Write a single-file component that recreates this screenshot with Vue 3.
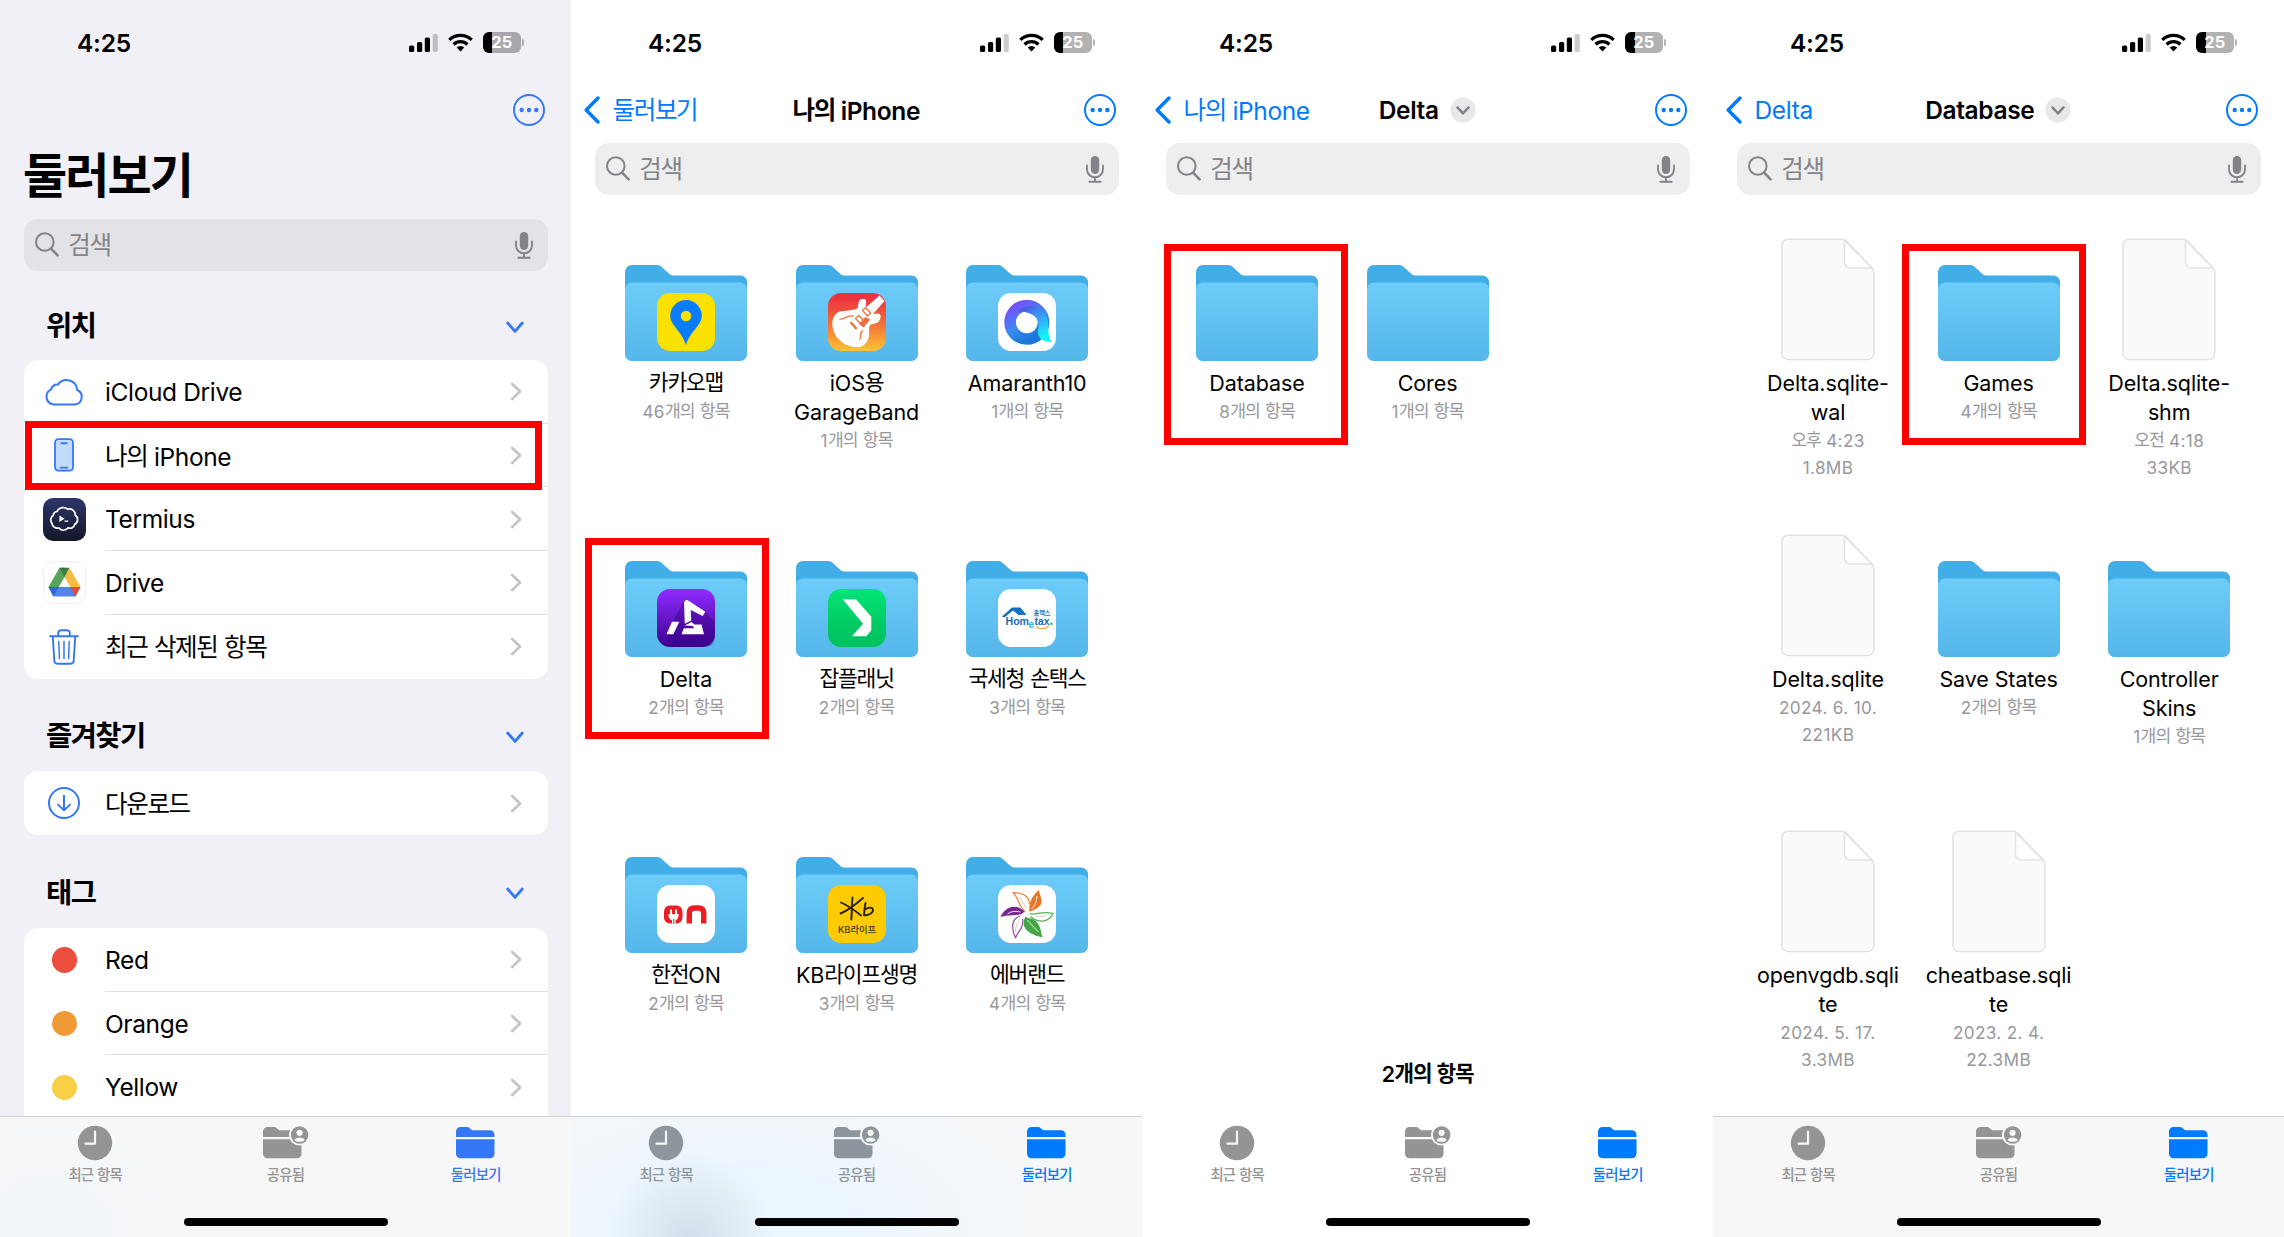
<script setup>
import { h } from 'vue'

// Splits a label into Hangul and Latin runs so each script gets its own tracking.
const Txt = (props) =>
  h(
    'span',
    { class: 'txt' },
    (props.t.match(/[가-힣]+|[^가-힣]+/g) || []).map((r) =>
      h('span', { class: /[가-힣]/.test(r) ? 'ko' : 'la' }, r)
    )
  )
Txt.props = ['t']

const sections = [
  {
    title: '위치',
    rows: [
      { icon: 'cloud', label: 'iCloud Drive' },
      { icon: 'phone', label: '나의 iPhone' },
      { icon: 'termius', label: 'Termius' },
      { icon: 'gdrive', label: 'Drive' },
      { icon: 'trash', label: '최근 삭제된 항목' },
    ],
  },
  { title: '즐겨찾기', rows: [{ icon: 'download', label: '다운로드' }] },
  {
    title: '태그',
    open: true,
    rows: [
      { icon: 'dot', color: '#eb4e3d', label: 'Red' },
      { icon: 'dot', color: '#f09a37', label: 'Orange' },
      { icon: 'dot', color: '#f8cf47', label: 'Yellow' },
    ],
  },
]

const folder = (name, sub, app) => ({ kind: 'folder', name: [].concat(name), sub: [].concat(sub), app })
const file = (name, sub) => ({ kind: 'file', name: [].concat(name), sub })

const panels = [
  { id: 'browse', root: true, mark: 'm1' },
  {
    id: 'phone',
    back: '둘러보기',
    title: '나의 iPhone',
    mark: 'm2',
    items: [
      folder('카카오맵', '46개의 항목', 'kakao'),
      folder(['iOS용', 'GarageBand'], '1개의 항목', 'garage'),
      folder('Amaranth10', '1개의 항목', 'amaranth'),
      folder('Delta', '2개의 항목', 'delta'),
      folder('잡플래닛', '2개의 항목', 'job'),
      folder('국세청 손택스', '3개의 항목', 'tax'),
      folder('한전ON', '2개의 항목', 'on'),
      folder('KB라이프생명', '3개의 항목', 'kb'),
      folder('에버랜드', '4개의 항목', 'ever'),
    ],
  },
  {
    id: 'delta',
    back: '나의 iPhone',
    title: 'Delta',
    menu: true,
    mark: 'm3',
    footer: '2개의 항목',
    items: [folder('Database', '8개의 항목'), folder('Cores', '1개의 항목')],
  },
  {
    id: 'database',
    back: 'Delta',
    title: 'Database',
    menu: true,
    mark: 'm4',
    items: [
      file(['Delta.sqlite-', 'wal'], ['오후 4:23', '1.8MB']),
      folder('Games', '4개의 항목'),
      file(['Delta.sqlite-', 'shm'], ['오전 4:18', '33KB']),
      file('Delta.sqlite', ['2024. 6. 10.', '221KB']),
      folder('Save States', '2개의 항목'),
      folder(['Controller', 'Skins'], '1개의 항목'),
      file(['openvgdb.sqli', 'te'], ['2024. 5. 17.', '3.3MB']),
      file(['cheatbase.sqli', 'te'], ['2023. 2. 4.', '22.3MB']),
    ],
  },
]
</script>

<template>
  <div class="board">
    <svg class="defs" width="0" height="0">
      <defs>
        <linearGradient id="gFront" x1="0" y1="0" x2="0" y2="1"><stop offset="0" stop-color="#6dccf8" /><stop offset="1" stop-color="#55b6ea" /></linearGradient>
        <linearGradient id="gTerm" x1="0" y1="0" x2="0" y2="1"><stop offset="0" stop-color="#2d3669" /><stop offset="1" stop-color="#141728" /></linearGradient>
        <linearGradient id="gGarage" x1="0" y1="0" x2="0" y2="1"><stop offset="0.1" stop-color="#ee3340" /><stop offset="0.55" stop-color="#f4733a" /><stop offset="1" stop-color="#fcc52f" /></linearGradient>
        <linearGradient id="gAma" x1="0" y1="0" x2="0.6" y2="1"><stop offset="0" stop-color="#7a4cff" /><stop offset="0.6" stop-color="#3a8cf0" /><stop offset="1" stop-color="#1a76d8" /></linearGradient>
        <linearGradient id="gAma2" x1="0" y1="0" x2="0.5" y2="1"><stop offset="0" stop-color="#4a4bd0" /><stop offset="0.4" stop-color="#3f8df5" /><stop offset="1" stop-color="#12f4f6" /></linearGradient>
        <linearGradient id="gDelta" x1="0" y1="0" x2="0" y2="1"><stop offset="0" stop-color="#8f2bff" /><stop offset="1" stop-color="#3d0190" /></linearGradient>
        <linearGradient id="gJob" x1="0" y1="0" x2="0" y2="1"><stop offset="0" stop-color="#03e577" /><stop offset="0.6" stop-color="#00cb63" /><stop offset="1" stop-color="#00c25f" /></linearGradient>
      </defs>
    </svg>

    <section v-for="p in panels" :key="p.id" class="panel" :class="['p-' + p.id, { root: p.root }]">
      <header class="status">
        <span class="time">4:25</span>
        <svg class="signal" width="29" height="20" viewBox="0 0 29 20">
          <rect x="0" y="12.5" width="5.2" height="6.5" rx="1.6" />
          <rect x="8" y="9" width="5.2" height="10" rx="1.6" />
          <rect x="15.8" y="4.5" width="5.2" height="14.5" rx="1.6" />
          <rect x="23.6" y="1" width="5.2" height="18" rx="1.6" opacity="0.2" />
        </svg>
        <svg class="wifi" width="25" height="19" viewBox="0 0 25 19">
          <g fill="none" stroke="#000" stroke-width="3.2">
            <path d="M1.3 6.9a16 16 0 0 1 22.4 0" />
            <path d="M5.6 11.5a9.8 9.8 0 0 1 13.8 0" />
          </g>
          <path d="M12.5 18.6l-3.8-4.1a5.5 5.5 0 0 1 7.6 0z" />
        </svg>
        <span class="battery"><i></i><b>25</b></span>
      </header>

      <nav class="nav">
        <div class="back">
          <template v-if="p.back">
            <svg width="16" height="28" viewBox="0 0 16 28"><path d="M14 2L2.2 14 14 26" fill="none" stroke="currentColor" stroke-width="3.4" stroke-linecap="round" stroke-linejoin="round" /></svg>
            <Txt :t="p.back" />
          </template>
        </div>
        <div v-if="p.title" class="heading">
          <Txt :t="p.title" />
          <svg v-if="p.menu" width="26" height="26" viewBox="0 0 26 26"><circle cx="13" cy="13" r="12.6" fill="#e8e8e9" /><path d="M7.4 10.4l5.6 6 5.6-6" fill="none" stroke="#808085" stroke-width="2.4" stroke-linecap="round" stroke-linejoin="round" /></svg>
        </div>
        <div class="more">
          <svg width="34" height="34" viewBox="0 0 34 34"><circle cx="17" cy="17" r="15" fill="none" stroke="currentColor" stroke-width="2" /><g fill="currentColor"><circle cx="9.7" cy="17" r="2.2" /><circle cx="17" cy="17" r="2.2" /><circle cx="24.3" cy="17" r="2.2" /></g></svg>
        </div>
      </nav>

      <h1 v-if="p.root" class="big"><Txt t="둘러보기" /></h1>

      <div class="search">
        <svg width="24" height="25" viewBox="0 0 24 25"><circle cx="9.8" cy="10" r="8.8" fill="none" stroke="#838388" stroke-width="2" /><path d="M16.3 16.8l6.3 6.6" stroke="#838388" stroke-width="2.5" stroke-linecap="round" /></svg>
        <Txt t="검색" />
        <svg class="mic" width="18" height="28" viewBox="0 0 18 28"><rect x="4.8" y="1" width="8.4" height="18" rx="4.2" fill="#838388" /><path d="M1 10.5v3.8a8 8 0 0 0 16 0v-3.8M9 22.4v4.2M3.4 26.8h11.2" fill="none" stroke="#838388" stroke-width="1.9" stroke-linecap="round" /></svg>
      </div>

      <main v-if="p.root" class="lists">
        <template v-for="s in sections" :key="s.title">
          <div class="sec">
            <Txt :t="s.title" />
            <svg width="18" height="13" viewBox="0 0 18 13"><path d="M1.7 2l7.3 8.4L16.3 2" fill="none" stroke="#3478f6" stroke-width="2.8" stroke-linecap="round" stroke-linejoin="round" /></svg>
          </div>
          <div class="card" :class="{ open: s.open }">
            <div v-for="r in s.rows" :key="r.label" class="row">
              <span class="ico">
                <svg v-if="r.icon === 'cloud'" width="40" height="30" viewBox="0 0 40 30"><path d="M9.5 27.5A8 8 0 0 1 7.2 12.3 6 6 0 0 1 14 7.6 10.6 10.6 0 0 1 33.2 13 7.6 7.6 0 0 1 31 27.5z" fill="none" stroke="#3478f6" stroke-width="2" stroke-linejoin="round" /></svg>
                <svg v-else-if="r.icon === 'phone'" width="20" height="34" viewBox="0 0 20 34"><rect x="1" y="1.2" width="18" height="31.4" rx="3.4" fill="#c2dafb" stroke="#3478f6" stroke-width="1.8" /><path d="M7.4 5.2h5.2" stroke="#3478f6" stroke-width="2" stroke-linecap="round" /><path d="M6.4 29.6h7.2" stroke="#3478f6" stroke-width="1.6" stroke-linecap="round" /></svg>
                <svg v-else-if="r.icon === 'termius'" width="43" height="43" viewBox="0 0 43 43"><rect width="43" height="43" rx="10" fill="url(#gTerm)" /><path d="M14 13.5c2-4.5 8-5 10.5-2.3 4-1.2 8 1.8 7.7 5.8 3.4 2.5 3 7.5-.4 9.2-.6 3.3-4 4.8-6.6 3.6-2.4 3.2-7 3.2-9.2.2-3.6.7-6.6-1.2-7-4.4-2-2.6-1.6-6.4 1.2-8.1.2-1.8 1.6-3.8 3.8-4z" fill="none" stroke="#fff" stroke-width="1.7" /><path d="M17 18.6l3.4 2.1-3.4 2.1zM21.5 23.2h3.8" stroke="#fff" stroke-width="1.2" fill="#c9cde0" /></svg>
                <svg v-else-if="r.icon === 'gdrive'" width="43" height="43" viewBox="0 0 43 43"><rect x="0.5" y="0.5" width="42" height="42" rx="10" fill="#fff" stroke="#f0f0f1" /><path d="M16.4 6.7h5.1l3.2 6.1-8.6 17.6-5.4 5.1-5.2-9.500z" fill="#57a55c" /><path d="M16.4 6.7h10.2l-5.1 9.4z" fill="#3b7d3e" /><path d="M26.6 6.7L37.5 26h-10.3l-5.7-9.9z" fill="#f2bd42" /><path d="M5.5 26h32l-5 9.5h-22z" fill="#5383ec" /><path d="M5.5 26h10.3l-5.3 9.5z" fill="#3267d0" /><path d="M27.2 26h10.3l-5 9.5z" fill="#d9503f" /><path d="M21.5 16.1L27.2 26H15.8z" fill="#fff" /></svg>
                <svg v-else-if="r.icon === 'trash'" width="30" height="36" viewBox="0 0 30 36"><g fill="none" stroke="#3478f6" stroke-width="1.9" stroke-linecap="round" stroke-linejoin="round"><path d="M1.2 7.3h27.6" /><path d="M9.2 7V4a2.8 2.8 0 0 1 2.8-2.8h6A2.8 2.8 0 0 1 20.8 4v3" /><path d="M3.8 7.6l1.5 24.2a3 3 0 0 0 3 2.9h13.4a3 3 0 0 0 3-2.9l1.5-24.2" /><path d="M9.8 12.5l.6 17M15 12.5v17M20.2 12.5l-.6 17" stroke-width="1.5" /></g></svg>
                <svg v-else-if="r.icon === 'download'" width="34" height="34" viewBox="0 0 34 34"><g fill="none" stroke="#3478f6" stroke-width="2" stroke-linecap="round" stroke-linejoin="round"><circle cx="17" cy="17" r="15" /><path d="M17 9.8v14M11 18.6l6 5.8 6-5.8" /></g></svg>
                <i v-else class="dot" :style="{ background: r.color }"></i>
              </span>
              <div class="cell">
                <Txt :t="r.label" />
                <svg width="12" height="19" viewBox="0 0 12 19"><path d="M2 1.8l8 7.7-8 7.7" fill="none" stroke="#c4c4c7" stroke-width="2.6" stroke-linecap="round" stroke-linejoin="round" /></svg>
              </div>
            </div>
          </div>
        </template>
      </main>

      <main v-else class="grid">
        <div v-for="it in p.items" :key="it.name.join('')" class="item">
          <div class="thumb">
            <svg v-if="it.kind === 'folder'" width="122" height="96" viewBox="0 0 122 96">
              <path d="M0 28V7a7 7 0 0 1 7-7h25.5a6 6 0 0 1 4 1.7L44.5 9a5 5 0 0 0 3.5 1.5h67.5a6.5 6.5 0 0 1 6.5 6.5v14z" fill="#42aee8" />
              <path d="M0 24.5a7 7 0 0 1 7-7h108a7 7 0 0 1 7 7V89.5a6.5 6.5 0 0 1-6.5 6.5H6.5A6.5 6.5 0 0 1 0 89.5z" fill="url(#gFront)" />
            </svg>
            <svg v-else width="94" height="123" viewBox="0 0 94 123">
              <path d="M7 1.2h54.5c1.5 0 2.6.6 3.6 1.7l26.2 27.3c1 1 1.5 2 1.5 3.5V115.5a6 6 0 0 1-6 6H7a6 6 0 0 1-6-6v-108a6 6 0 0 1 6-6.3z" fill="#fafafa" stroke="#e3e3e4" stroke-width="1.6" />
              <path d="M63.5 2.2V24a6 6 0 0 0 6 6H91z" fill="#fff" stroke="#e3e3e4" stroke-width="1.6" stroke-linejoin="round" />
            </svg>

            <svg v-if="it.app" class="badge" width="58" height="58" viewBox="0 0 58 58">
              <template v-if="it.app === 'kakao'">
                <rect width="58" height="58" rx="13" fill="#fae100" />
                <path d="M29 7a15.8 15.8 0 0 1 15.8 15.8c0 9.5-10.8 14.5-15.8 29.2-5-14.7-15.8-19.7-15.8-29.2A15.8 15.8 0 0 1 29 7z" fill="#0a7cff" />
                <circle cx="29" cy="23" r="5.3" fill="#fae100" />
              </template>
              <template v-else-if="it.app === 'garage'">
                <rect width="58" height="58" rx="13" fill="url(#gGarage)" />
                <path d="M51.5 2.5l5 5.500L45 21c3-.8 6-1 7.2.7 1.200 1.700-.2 5.500-2.200 7.500-2.500 2-5.500.8-8 3-2 3 0 5.500-1 10.500-1 6-5 11.700-12.500 11.500C14 53.800 4.300 42 4.300 30.500c0-7 4.500-12.500 11-12.500 5 0 9-1 12.200-1.700 3.500-1 2-5.500 4-9 1.400-1.800 5.500-1.800 6.500 0 .8 2.500-1 4.500 0 7z" fill="#fff" />
                <g fill="none" stroke="#f4743a" stroke-width="1.3"><path d="M27.5 25.5l3.2-3 5 5-3.200 3zM34.5 17.5l3-3 5 5.500-3 3zM11.500 26c3 1.500 8-4.500 14-3M35 38c-4 1-1 6-3.500 8.500" /><path d="M22.500 29l6 7" stroke-width="2.4" /></g>
                <path d="M42 26.500l-6.500 8-4.500-3.500 6.500-7z" fill="#f26a3b" />
              </template>
              <template v-else-if="it.app === 'amaranth'">
                <rect width="58" height="58" rx="13" fill="#fff" />
                <circle cx="28.8" cy="29.3" r="16.7" fill="none" stroke="url(#gAma)" stroke-width="11.6" />
                <path d="M20 18c7-7 20-6 26 1 4.500 5.500 4.500 12 4.500 19 0 4 .7 6.500 3 10.500-4 .8-8.500-.5-11.500-3.500-2-3-2.300-5.500-2-8.500 2-8 0-16.500-20-18.500z" fill="url(#gAma2)" />
              </template>
              <template v-else-if="it.app === 'delta'">
                <rect width="58" height="58" rx="13" fill="url(#gDelta)" />
                <path d="M27 12L9.500 45.300 22 58h26c6 0 10-4 10-10V33L48 22.700z" fill="#35007f" opacity="0.35" />
                <g fill="#fff"><path d="M15 32.700h7.300l-6 12.600H9.500z" /><path d="M27 13.500c.5-2 2-2.800 3.500-2.500L48.300 22.700l-2.600 4.300-12-6 .6 10.500-6.500 3.200z" /><path d="M27.800 36.500l6.700-3.500 3 2.500h7l2.500 9.800H24.500l2.300-6h10.500l-1.500-2.300z" /></g>
              </template>
              <template v-else-if="it.app === 'job'">
                <rect width="58" height="58" rx="13" fill="url(#gJob)" />
                <path d="M14.7 10.300H28l15.300 17.400v13.600l-5 6H24l11-12.600z" fill="#fff" />
              </template>
              <template v-else-if="it.app === 'tax'">
                <rect width="58" height="58" rx="13" fill="#fff" />
                <path d="M4 27.500l10-9h8.500l6 7.500h-8l-5.500-4.500-8.500 7z" fill="#1272bd" />
                <text x="35.5" y="25.500" font-size="6.2" font-weight="700" fill="#1272bd" class="ktext" textLength="17">홈택스</text>
                <text x="7.5" y="35.5" font-size="11.5" font-weight="700" fill="#1a6db5" class="ltext" textLength="23.5" lengthAdjust="spacingAndGlyphs">Hom</text>
                <text x="30.5" y="38.5" font-size="10" font-weight="700" fill="#2ab4e0" class="ltext">e</text>
                <text x="36.5" y="35.5" font-size="11.5" font-weight="700" fill="#1a6db5" class="ltext" textLength="15" lengthAdjust="spacingAndGlyphs">tax</text>
                <circle cx="53.3" cy="34.7" r="1.2" fill="#2fb34a" />
                <path d="M38 37.500c3 3 9 3 13-.5" fill="none" stroke="#f5b13d" stroke-width="1.2" />
              </template>
              <template v-else-if="it.app === 'on'">
                <rect width="58" height="58" rx="13" fill="#fff" />
                <rect x="7" y="20.5" width="18.5" height="18" rx="6" fill="#ec1c24" />
                <path d="M11.500 29h10v2a5 5 0 0 1-3 4.300V39h-3.500v-3.700a5 5 0 0 1-3.500-4.300z" fill="#fff" />
                <path d="M14 24.500v5M19 24.500v5" stroke="#fff" stroke-width="2" />
                <path d="M16.700 34v5" stroke="#ec1c24" stroke-width="1" />
                <path d="M32.300 38.500V28.500c0-4 2-5.500 5-5.500h4.400c3 0 5 1.500 5 5.500v10" fill="none" stroke="#ec1c24" stroke-width="5.4" />
              </template>
              <template v-else-if="it.app === 'kb'">
                <rect width="58" height="58" rx="13" fill="#fecb00" />
                <g fill="none" stroke="#25221e" stroke-width="1.9" stroke-linecap="round"><path d="M24.500 12.500c-.8 8-.6 15-1.200 22M13 17.500c7 3 14 8 20 13M12.500 28.500c8-3 15-9 22.500-15.500" /><path d="M37.500 18c-.8 4-1.300 8-1.500 12 4 1 9-2 9-5s-4.500-3.200-8-.5" /></g>
                <text x="10" y="48.3" font-size="8.8" font-weight="500" fill="#3d3520" class="ktext" textLength="38" lengthAdjust="spacingAndGlyphs">KB라이프</text>
              </template>
              <template v-else>
                <rect width="58" height="58" rx="13" fill="#fff" />
                <g transform="translate(28.5 28)">
                  <path d="M3-1C2-9 5-17 12.500-23 13-18 17-12 14-8 11-4 6-3 3-1z" fill="#e97424" />
                  <path d="M-1-1.500C-8-6-7-14-13.500-20.500-6-20.500 3-18 2.800-9" fill="none" stroke="#ee8b49" stroke-width="1.3" stroke-linejoin="round" />
                  <path d="M-2-1.500C-6 4-15 1-26 4-22-5-12-11-2-1.500z" fill="#76278f" />
                  <path d="M-6 3C-16 6-15 16-11 25-9 18-2 15-4 6" fill="none" stroke="#9356a8" stroke-width="1.3" stroke-linejoin="round" />
                  <path d="M-1 3C-5 12-3 20 16 24.500 14 18 14 10 7 6.500 4 5-1 5-1 3z" fill="#43a744" />
                  <path d="M3 0.500C10 3 15-3 26.500 0.700 22 10 11 10 4 3.500" fill="none" stroke="#54b157" stroke-width="1.3" stroke-linejoin="round" />
                  <path d="M5-4C9-8 10-12 10.500-17M-6-1c-5-1-9-1-13 2M1 7c3 4 7 8 11 12" fill="none" stroke="#fff" stroke-width="0.9" />
                  <path d="M0-4C-2-9-5-13-8-16M9 3.500c4 0 8 0 11-1M-7 7c-3 4-4 8-4 12" fill="none" stroke="#d9b48f" stroke-width="0.7" />
                </g>
              </template>
            </svg>
          </div>
          <div v-for="n in it.name" :key="n" class="name"><Txt :t="n" /></div>
          <div v-for="n in it.sub" :key="n" class="sub"><Txt :t="n" /></div>
        </div>
        <div v-if="p.footer" class="count"><Txt :t="p.footer" /></div>
      </main>

      <footer class="tabs">
        <div class="tab">
          <svg width="36" height="36" viewBox="0 0 36 36"><circle cx="18" cy="18" r="17.2" fill="currentColor" /><path d="M18 6.500V18.700H8.500" fill="none" stroke="#f7f7f7" stroke-width="2.2" stroke-linecap="round" stroke-linejoin="round" /></svg>
          <Txt t="최근 항목" />
        </div>
        <div class="tab">
          <svg class="shared" width="46" height="36" viewBox="0 0 46 36"><path d="M0 12V6.500A4.500 4.500 0 0 1 4.500 2h5.800c1.600 0 2.600.5 3.700 1.400l1.200 1c.8.6 1.500.8 2.500.8H34a4.500 4.500 0 0 1 4.500 4.500V12zM0 14.200h38.500v14.500a4.500 4.500 0 0 1-4.500 4.500H4.500A4.500 4.500 0 0 1 0 28.700z" fill="currentColor" /><circle cx="36.6" cy="10" r="10.6" fill="#f6f7f7" /><circle cx="36.6" cy="10" r="8.7" fill="currentColor" /><circle cx="36.6" cy="7.8" r="3.1" fill="#f6f7f7" /><path d="M31.600 15.200c.6-3.600 9.400-3.600 10 0-2 2.200-8 2.200-10 0z" fill="#f6f7f7" /></svg>
          <Txt t="공유됨" />
        </div>
        <div class="tab on">
          <svg width="39" height="36" viewBox="0 0 39 36"><path d="M0 12V6.500A4.500 4.500 0 0 1 4.500 2h5.800c1.600 0 2.600.5 3.700 1.400l1.200 1c.8.6 1.500.8 2.500.8H34a4.500 4.500 0 0 1 4.500 4.500V12zM0 14.200h38.500v14.500a4.500 4.500 0 0 1-4.500 4.500H4.500A4.500 4.500 0 0 1 0 28.700z" fill="currentColor" /></svg>
          <Txt t="둘러보기" />
        </div>
        <i class="home"></i>
      </footer>

      <i class="mark" :class="p.mark"></i>
    </section>
  </div>
</template>

<style>
body { margin: 0; }
.txt { white-space: pre; }
.ko { letter-spacing: -0.055em; position: relative; top: -0.05em; }
.la { letter-spacing: -0.015em; }
.name .la { letter-spacing: -0.005em; }
.sub .la { letter-spacing: 0.02em; }
.big .ko { letter-spacing: -0.04em; top: 0; }
</style>

<style scoped>
.board { display: flex; width: 2284px; height: 1237px; overflow: hidden; background: #fff; font-family: Inter, "Noto Sans CJK KR", "Noto Sans CJK SC", sans-serif; color: #000; }
.defs { position: absolute; }
svg { display: block; flex: none; }
.ktext { font-family: Inter, "Noto Sans CJK KR", sans-serif; }
.ltext { font-family: "Liberation Sans", sans-serif; }

.panel { --accent: #007aff; position: relative; display: flex; flex-direction: column; width: 571px; height: 1237px; background: #fff; overflow: hidden; }
.panel.root { --accent: #3478f6; background: #f1f0f6; }

.status { display: flex; align-items: center; height: 85px; flex: none; padding: 0 47.5px 0 77px; box-sizing: border-box; }
.time { font-size: 24.5px; font-weight: 600; letter-spacing: -0.2px; margin-right: auto; }
.signal { margin-right: 10.5px; }
.wifi { margin-right: 10px; }
.battery { position: relative; width: 37.5px; height: 20.5px; border-radius: 6px; background: linear-gradient(90deg, #000 25%, rgba(0, 0, 0, 0.3) 25%); display: flex; align-items: center; justify-content: center; margin-right: 3px; }
.battery b { font-size: 16.5px; font-weight: 700; color: #fff; line-height: 1; }
.battery i { position: absolute; right: -3.2px; top: 7px; width: 2px; height: 6.5px; border-radius: 0 2px 2px 0; background: rgba(0, 0, 0, 0.3); }

.nav { display: grid; grid-template-columns: 1fr auto 1fr; align-items: center; height: 49px; flex: none; padding: 0 25px 0 13px; position: relative; }
.back { display: flex; align-items: center; gap: 12.5px; color: var(--accent); font-size: 24.5px; }
.heading { display: flex; align-items: center; gap: 11px; font-size: 24.5px; font-weight: 600; grid-column: 2; margin-left: 11.5px; }
.more { grid-column: 3; display: flex; justify-content: flex-end; color: var(--accent); }

.big { margin: 0; height: 85px; flex: none; line-height: 83px; padding-left: 23px; font-size: 48px; font-weight: 700; }
.search { display: flex; align-items: center; height: 51.5px; flex: none; margin: 9.2px 23.5px 0; padding: 0 15px 0 11px; border-radius: 14px; background: #eeeeee; color: #838388; font-size: 24.5px; gap: 9.8px; }
.root .search { margin-top: 0; background: #e3e2e7; }
.mic { margin-left: auto; }

.lists { flex: 1; min-height: 0; overflow: hidden; }
.sec { display: flex; align-items: center; justify-content: space-between; height: 92.8px; box-sizing: border-box; padding: 20.5px 47px 0 46px; font-size: 28.5px; font-weight: 600; }
.sec:first-child { height: 89.3px; padding-top: 20.5px; }
.sec svg { margin-top: 4px; }
.card { margin: 0 23.5px; border-radius: 14px; background: #fff; overflow: hidden; }
.card.open { padding-bottom: 20px; }
.row { display: flex; align-items: stretch; height: 63.75px; }
.ico { width: 81.5px; display: flex; align-items: center; justify-content: center; }
.dot { width: 25.5px; height: 25.5px; border-radius: 50%; }
.cell { flex: 1; display: flex; align-items: center; justify-content: space-between; padding-right: 26px; font-size: 24.5px; box-shadow: inset 0 -1px 0 #dfdfe1; }
.row:last-child .cell { box-shadow: none; }

.grid { flex: 1; min-height: 0; position: relative; display: grid; grid-template-columns: repeat(3, 170.6px); grid-auto-rows: 296px; align-content: start; padding: 44px 0 0 29.7px; overflow: hidden; }
.item { display: flex; flex-direction: column; align-items: center; }
.thumb { position: relative; display: flex; align-items: flex-end; justify-content: center; width: 122px; height: 122px; margin-bottom: 8px; flex: none; }
.badge { position: absolute; left: 32px; bottom: 9.5px; }
.name { height: 29px; line-height: 29px; font-size: 21.5px; flex: none; }
.sub { height: 27px; line-height: 27px; font-size: 17.2px; color: #98989c; flex: none; }
.count { position: absolute; left: 0; right: 0; bottom: 27px; height: 30px; line-height: 30px; text-align: center; font-size: 21.3px; font-weight: 600; }

.tabs { position: relative; display: grid; grid-template-columns: repeat(3, 190.3px); height: 121px; flex: none; box-sizing: border-box; border-top: 1.5px solid #cfcfd1; background: #f7f7f7; }
.p-browse .tabs { background: radial-gradient(circle at 50px 121px, #f0f5fb, rgba(247, 247, 247, 0) 130px), #f7f7f7; }
.p-phone .tabs { background: radial-gradient(ellipse 85px 90px at 120px 125px, rgba(208, 219, 232, 0.9), rgba(225, 238, 250, 0)), radial-gradient(ellipse 360px 190px at 170px 110px, #ecf6fe 25%, rgba(247, 247, 247, 0)), #f7f7f7; }
.p-delta .tabs { background: #fff; border-color: transparent; }
.tab { display: flex; flex-direction: column; align-items: center; padding-top: 8px; color: #949494; font-size: 14.4px; font-weight: 500; }
.p-phone .tab { color: #8d969c; }
.tab .txt { line-height: 20px; margin-top: 5px; }
.tab.on, .p-phone .tab.on { color: var(--accent); }
.shared { margin-left: 2px; }
.home { position: absolute; left: 184px; bottom: 11.5px; width: 203.5px; height: 8px; border-radius: 4px; background: #000; }

.mark { position: absolute; box-sizing: border-box; border: 7px solid #f00; }
.m1 { left: 25px; top: 421px; width: 517px; height: 69px; }
.m2 { left: 14px; top: 538px; width: 184px; height: 201px; }
.m3 { left: 22px; top: 244px; width: 184px; height: 201px; }
.m4 { left: 189px; top: 244px; width: 184px; height: 201px; }
</style>
